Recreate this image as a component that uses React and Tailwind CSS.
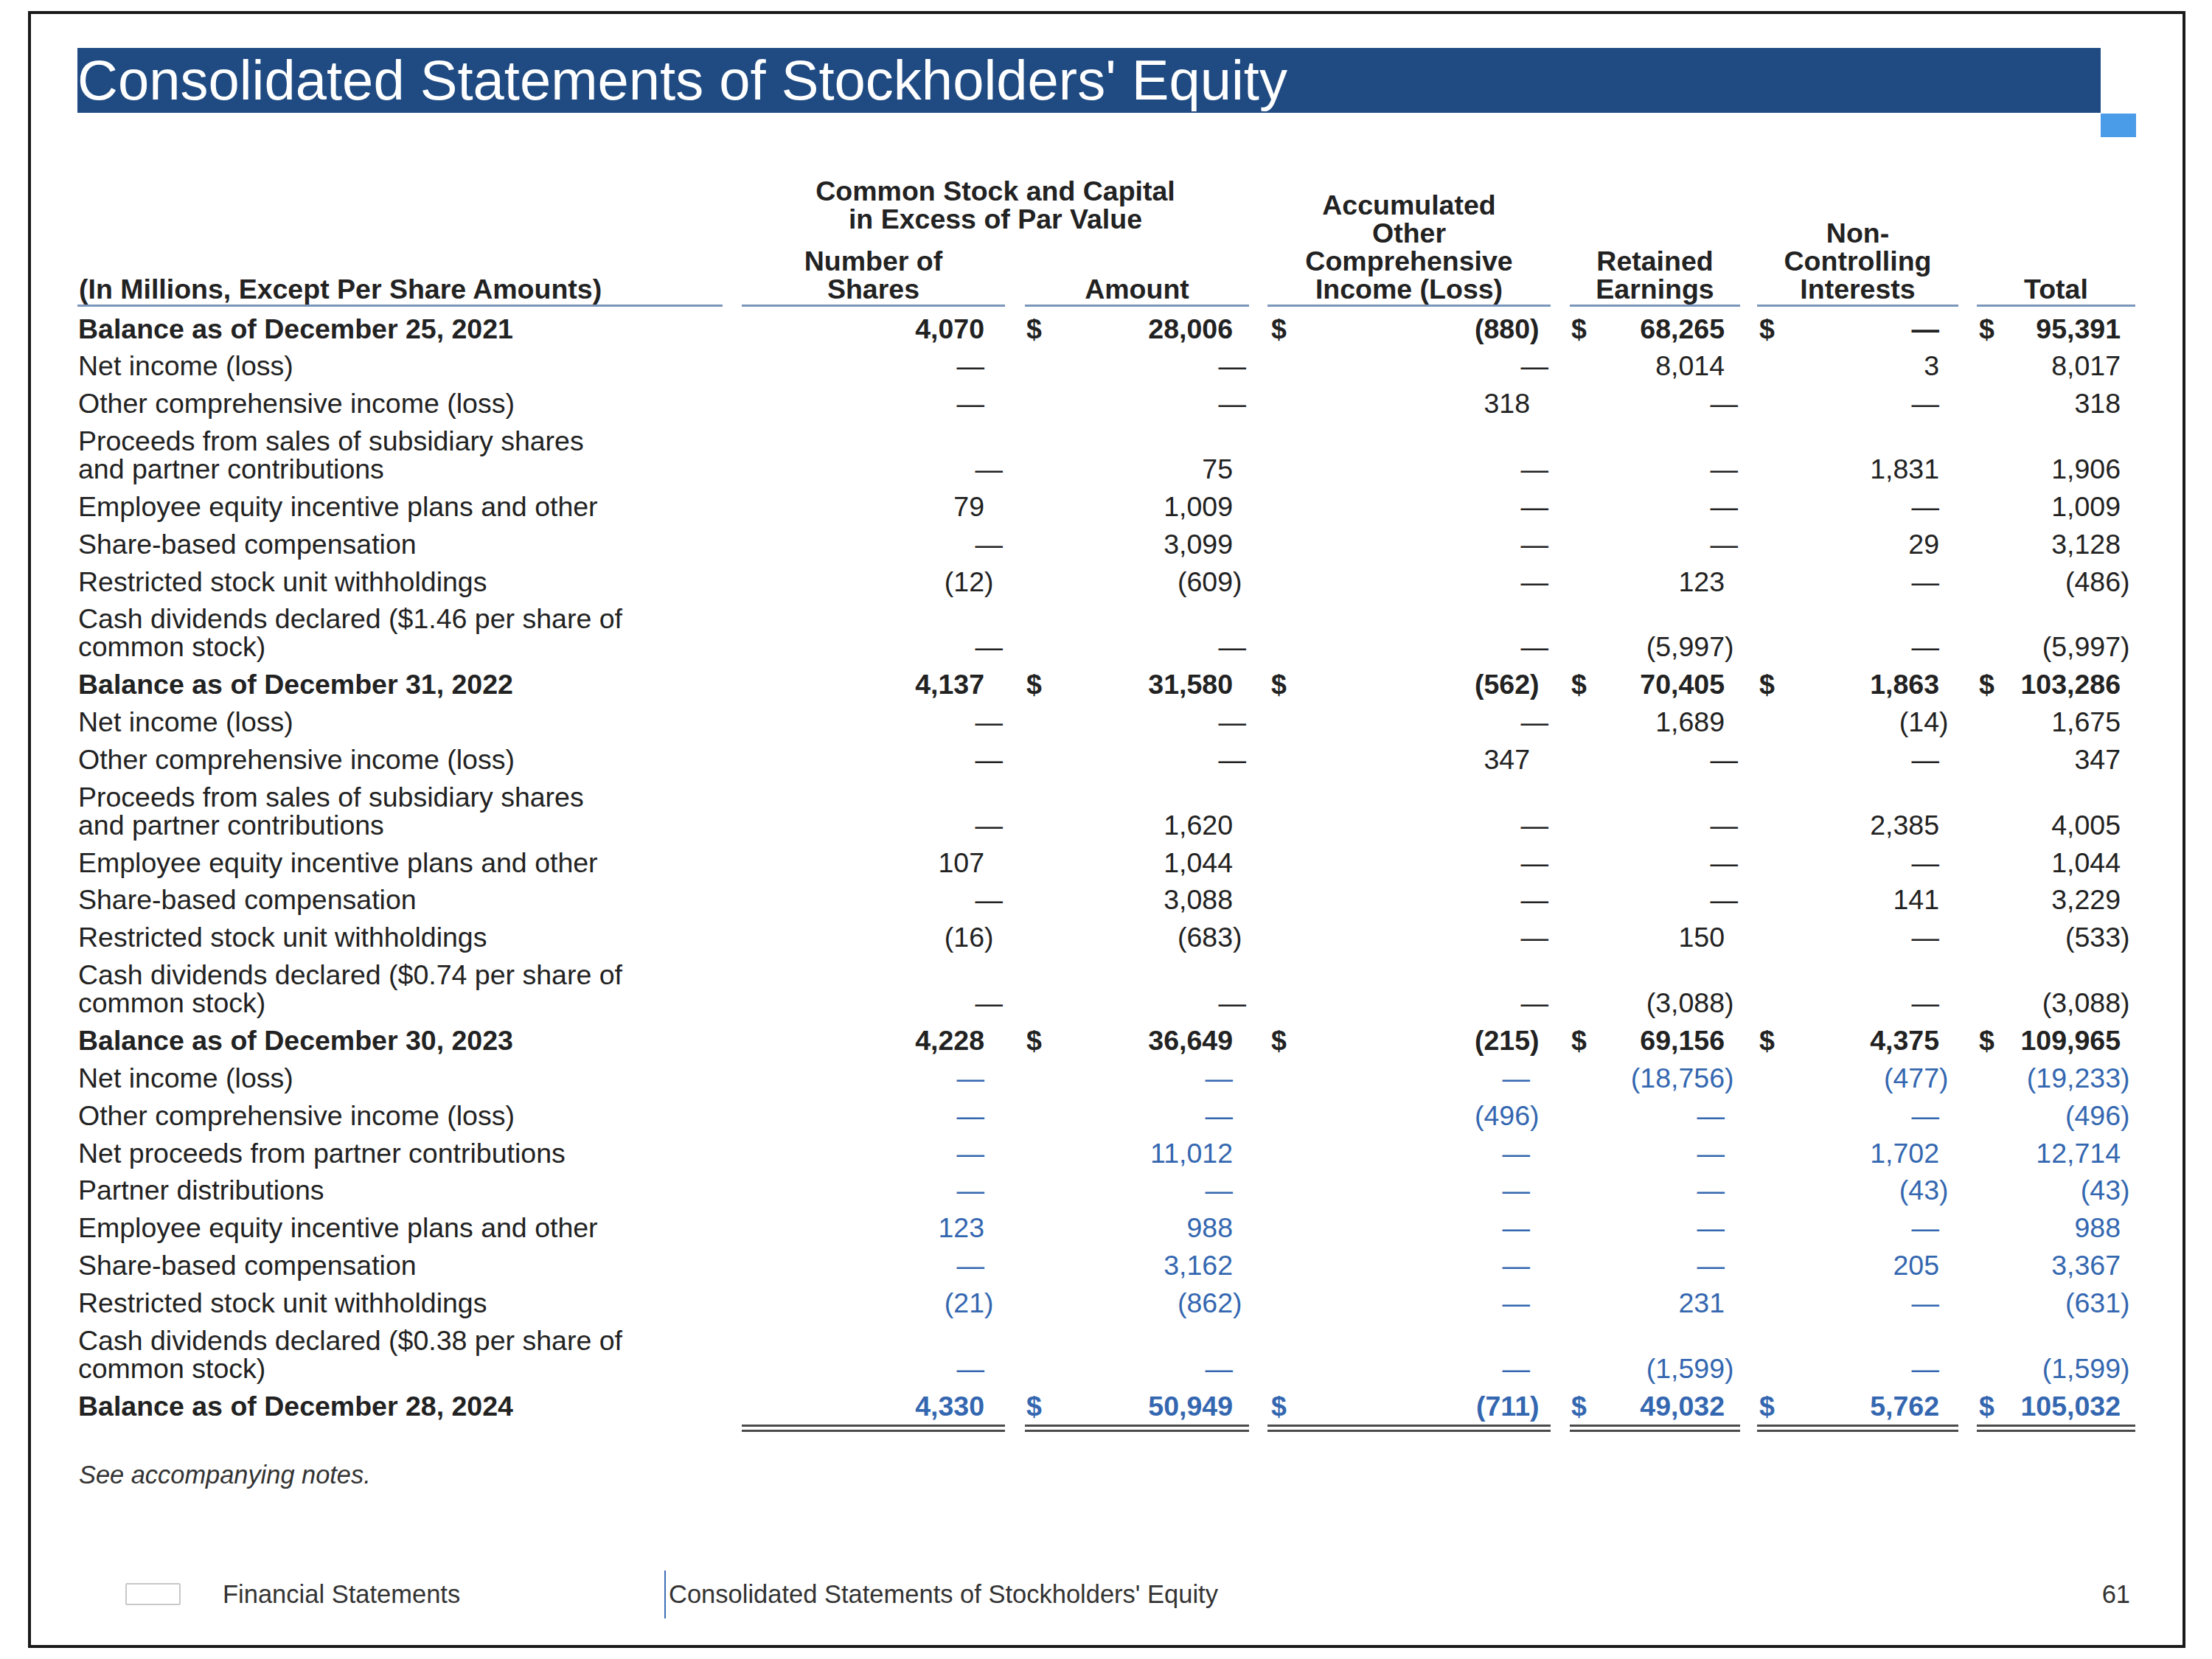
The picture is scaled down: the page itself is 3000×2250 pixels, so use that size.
import React from "react"

// column geometry (px) for the six numeric columns
const COLS = [
  { w: "w-[357px]", ml: "ml-[26px]", pr: "pr-[28px]", prD: "pr-[3px]", dl: "pl-[2px]" },
  { w: "w-[304px]", ml: "ml-[27px]", pr: "pr-[22px]", prD: "pr-[4px]", dl: "pl-[2px]" },
  { w: "w-[384px]", ml: "ml-[25px]", pr: "pr-[28px]", prD: "pr-[3px]", dl: "pl-[5px]" },
  { w: "w-[231px]", ml: "ml-[26px]", pr: "pr-[21px]", prD: "pr-[3px]", dl: "pl-[2px]" },
  { w: "w-[273px]", ml: "ml-[23px]", pr: "pr-[26px]", prD: "pr-[3px]", dl: "pl-[3px]" },
  { w: "w-[215px]", ml: "ml-[25px]", pr: "pr-[20px]", prD: "pr-[3px]", dl: "pl-[3px]" },
]

// d = dash lined up with digits, D = dash pushed to the column edge
const ROWS = [
  { label: ["Balance as of December 25, 2021"], bold: true, dollars: true, vals: ["4,070", "28,006", "(880)", "68,265", "d", "95,391"] },
  { label: ["Net income (loss)"], vals: ["d", "D", "D", "8,014", "3", "8,017"] },
  { label: ["Other comprehensive income (loss)"], vals: ["d", "D", "318", "D", "d", "318"] },
  { label: ["Proceeds from sales of subsidiary shares", "and partner contributions"], vals: ["D", "75", "D", "D", "1,831", "1,906"] },
  { label: ["Employee equity incentive plans and other"], vals: ["79", "1,009", "D", "D", "d", "1,009"] },
  { label: ["Share-based compensation"], vals: ["D", "3,099", "D", "D", "29", "3,128"] },
  { label: ["Restricted stock unit withholdings"], vals: ["(12)", "(609)", "D", "123", "d", "(486)"] },
  { label: ["Cash dividends declared ($1.46 per share of", "common stock)"], vals: ["D", "D", "D", "(5,997)", "d", "(5,997)"] },
  { label: ["Balance as of December 31, 2022"], bold: true, dollars: true, vals: ["4,137", "31,580", "(562)", "70,405", "1,863", "103,286"] },
  { label: ["Net income (loss)"], vals: ["D", "D", "D", "1,689", "(14)", "1,675"] },
  { label: ["Other comprehensive income (loss)"], vals: ["D", "D", "347", "D", "d", "347"] },
  { label: ["Proceeds from sales of subsidiary shares", "and partner contributions"], vals: ["D", "1,620", "D", "D", "2,385", "4,005"] },
  { label: ["Employee equity incentive plans and other"], vals: ["107", "1,044", "D", "D", "d", "1,044"] },
  { label: ["Share-based compensation"], vals: ["D", "3,088", "D", "D", "141", "3,229"] },
  { label: ["Restricted stock unit withholdings"], vals: ["(16)", "(683)", "D", "150", "d", "(533)"] },
  { label: ["Cash dividends declared ($0.74 per share of", "common stock)"], vals: ["D", "D", "D", "(3,088)", "d", "(3,088)"] },
  { label: ["Balance as of December 30, 2023"], bold: true, dollars: true, vals: ["4,228", "36,649", "(215)", "69,156", "4,375", "109,965"] },
  { label: ["Net income (loss)"], blue: true, vals: ["d", "d", "d", "(18,756)", "(477)", "(19,233)"] },
  { label: ["Other comprehensive income (loss)"], blue: true, vals: ["d", "d", "(496)", "d", "d", "(496)"] },
  { label: ["Net proceeds from partner contributions"], blue: true, vals: ["d", "11,012", "d", "d", "1,702", "12,714"] },
  { label: ["Partner distributions"], blue: true, vals: ["d", "d", "d", "d", "(43)", "(43)"] },
  { label: ["Employee equity incentive plans and other"], blue: true, vals: ["123", "988", "d", "d", "d", "988"] },
  { label: ["Share-based compensation"], blue: true, vals: ["d", "3,162", "d", "d", "205", "3,367"] },
  { label: ["Restricted stock unit withholdings"], blue: true, vals: ["(21)", "(862)", "d", "231", "d", "(631)"] },
  { label: ["Cash dividends declared ($0.38 per share of", "common stock)"], blue: true, vals: ["d", "d", "d", "(1,599)", "d", "(1,599)"] },
  { label: ["Balance as of December 28, 2024"], bold: true, blue: true, dollars: true, last: true, vals: ["4,330", "50,949", "(711)", "49,032", "5,762", "105,032"] },
]

function Value({ v }) {
  if (v === "d" || v === "D") return "—"
  if (v.startsWith("(")) {
    return (
      <>
        {v.slice(0, -1)}
        <span className="inline-block w-0">)</span>
      </>
    )
  }
  return v
}

function Row({ row }) {
  const numColor = row.blue ? "text-[#3467b0]" : "text-[#222]"
  return (
    <div className={`flex items-end ${row.last ? "pt-[6.5px]" : "pt-[6.5px] pb-[6.35px]"} ${row.bold ? "font-bold" : ""}`}>
      <div className={`w-[875px] text-[#222] pl-[1px] ${row.last ? "pb-[16.35px]" : ""}`}>
        {row.label.map((l, i) => (
          <div key={i}>{l}</div>
        ))}
      </div>
      {row.vals.map((v, i) => {
        const c = COLS[i]
        return (
          <div
            key={i}
            className={`${c.w} ${c.ml} ${numColor} flex items-end justify-between ${v === "D" ? c.prD : c.pr} ${row.last ? "pb-[6.35px] border-b-[10px] border-double border-[#4a4a4a]" : ""}`}
          >
            <span className={c.dl}>{row.dollars && i > 0 ? "$" : ""}</span>
            <span>
              <Value v={v} />
            </span>
          </div>
        )
      })}
    </div>
  )
}

function HeadCell({ lines, className }) {
  return (
    <div className={`${className} text-center border-b-[3px] border-[#7b96bb] pb-[2px]`}>
      {lines.map((l, i) => (
        <div key={i}>{l}</div>
      ))}
    </div>
  )
}

export default function App() {
  return (
    <div className="w-[3000px] h-[2250px] bg-white pt-[15px] pl-[38px] font-['Liberation_Sans',Arial,sans-serif]">
      <div className="w-[2926px] h-[2220px] border-[4px] border-[#1a1a1a] flex flex-col">
        {/* Title bar */}
        <div className="flex items-start ml-[63px] mt-[46px]">
          <div className="w-[2744px] h-[88px] bg-[#1f4a82] text-white text-[76px] leading-[88px] whitespace-nowrap">
            Consolidated Statements of Stockholders' Equity
          </div>
          <div className="w-[48px] h-[32px] mt-[89px] bg-[#4a9be8]"></div>
        </div>

        {/* Table */}
        <div className="ml-[63px] mt-[54px] text-[37.5px] leading-[38px]">
          {/* Header */}
          <div className="flex items-end font-bold text-[#222]">
            <div className="w-[875px] border-b-[3px] border-[#7b96bb] pb-[2px] pl-[2px]">
              (In Millions, Except Per Share Amounts)
            </div>
            <div className="ml-[26px] w-[688px] flex flex-col">
              <div className="text-center mb-[19px]">
                <div>Common Stock and Capital</div>
                <div>in Excess of Par Value</div>
              </div>
              <div className="flex items-end">
                <HeadCell lines={["Number of", "Shares"]} className="w-[357px]" />
                <HeadCell lines={["Amount"]} className="w-[304px] ml-[27px]" />
              </div>
            </div>
            <HeadCell lines={["Accumulated", "Other", "Comprehensive", "Income (Loss)"]} className="w-[384px] ml-[25px]" />
            <HeadCell lines={["Retained", "Earnings"]} className="w-[231px] ml-[26px]" />
            <HeadCell lines={["Non-", "Controlling", "Interests"]} className="w-[273px] ml-[23px]" />
            <HeadCell lines={["Total"]} className="w-[215px] ml-[25px]" />
          </div>

          {/* Body */}
          <div className="mt-[4px]">
            {ROWS.map((row, i) => (
              <Row key={i} row={row} />
            ))}
          </div>
        </div>

        <div className="ml-[65px] mt-[39px] italic text-[34.4px] leading-[38px] text-[#333]">
          See accompanying notes.
        </div>

        {/* Footer */}
        <div className="flex items-center mt-[111px] text-[34.5px] leading-[38px] text-[#333]">
          <div className="ml-[128px] w-[75px] h-[30px] border-[2px] border-[#c8c8c8] rounded-[2px]"></div>
          <div className="ml-[57px] w-[599px]">Financial Statements</div>
          <div className="w-[2px] h-[65px] bg-[#3c6db4]"></div>
          <div className="ml-[4px] flex-1">Consolidated Statements of Stockholders' Equity</div>
          <div className="pr-[71px]">61</div>
        </div>
      </div>
    </div>
  )
}
